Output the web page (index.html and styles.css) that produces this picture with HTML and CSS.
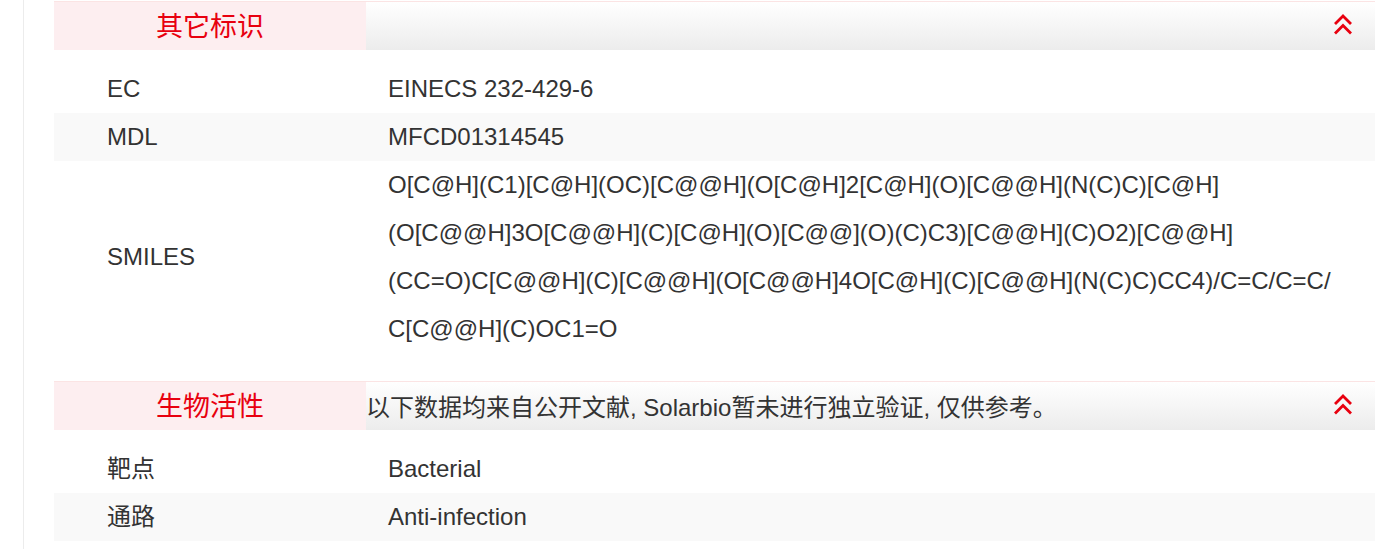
FILE: index.html
```html
<!DOCTYPE html>
<html lang="zh-CN">
<head>
<meta charset="utf-8">
<title>产品信息</title>
<link rel="stylesheet" href="styles.css">
</head>
<body>
<div class="page">
  <section class="sect">
    <div class="sect-head">
      <div class="sect-title">其它标识</div>
      <div class="sect-note"></div>
      <svg class="toggle" viewBox="0 0 20 22" width="20" height="22" aria-hidden="true">
        <polyline points="2,10 10,2 18,10" />
        <polyline points="2,19.5 10,11.5 18,19.5" />
      </svg>
    </div>
    <div class="props">
      <div class="prop"><div class="prop-k">EC</div><div class="prop-v">EINECS 232-429-6</div></div>
      <div class="prop alt"><div class="prop-k">MDL</div><div class="prop-v">MFCD01314545</div></div>
      <div class="prop"><div class="prop-k">SMILES</div><div class="prop-v">O[C@H](C1)[C@H](OC)[C@@H](O[C@H]2[C@H](O)[C@@H](N(C)C)[C@H]<br>(O[C@@H]3O[C@@H](C)[C@H](O)[C@@](O)(C)C3)[C@@H](C)O2)[C@@H]<br>(CC=O)C[C@@H](C)[C@@H](O[C@@H]4O[C@H](C)[C@@H](N(C)C)CC4)/C=C/C=C/<br>C[C@@H](C)OC1=O</div></div>
    </div>
  </section>
  <section class="sect">
    <div class="sect-head">
      <div class="sect-title">生物活性</div>
      <div class="sect-note">以下数据均来自公开文献, Solarbio暂未进行独立验证, 仅供参考。</div>
      <svg class="toggle" viewBox="0 0 20 22" width="20" height="22" aria-hidden="true">
        <polyline points="2,10 10,2 18,10" />
        <polyline points="2,19.5 10,11.5 18,19.5" />
      </svg>
    </div>
    <div class="props">
      <div class="prop"><div class="prop-k">靶点</div><div class="prop-v">Bacterial</div></div>
      <div class="prop alt"><div class="prop-k">通路</div><div class="prop-v">Anti-infection</div></div>
    </div>
  </section>
</div>
</body>
</html>
```
FILE: styles.css
```css
html, body {
  margin: 0;
  padding: 0;
  background: #fff;
  overflow: hidden;
}
body {
  font-family: "Liberation Sans", Arial, "Noto Sans CJK SC", sans-serif;
  color: #333;
  font-size: 24px;
}
.page {
  margin-left: 23px;
  border-left: 1px solid #ececec;
  padding: 1px 0 0 30px;
  min-height: 560px;
}
.sect-head {
  display: flex;
  align-items: center;
  height: 48px;
  border-top: 1px solid #fbe4e4;
  background: linear-gradient(#ffffff, #ececec);
}
.sect-title {
  width: 312px;
  flex: none;
  align-self: stretch;
  display: flex;
  align-items: center;
  justify-content: center;
  padding-bottom: 3px;
  box-sizing: border-box;
  background: #fdeef0;
  color: #e8000f;
  font-size: 27px;
}
.sect-note {
  flex: 1;
  white-space: nowrap;
  font-size: 24px;
  color: #333;
  padding-bottom: 1px;
}
.toggle {
  flex: none;
  margin-right: 22px;
  margin-bottom: 2px;
  fill: none;
  stroke: #e8000f;
  stroke-width: 2.8;
}
.props {
  margin: 15px 0 28px;
}
.prop {
  display: flex;
  align-items: center;
  min-height: 48px;
  line-height: 48px;
}
.prop.alt {
  background: #f9f9f9;
}
.prop-k {
  width: 259px;
  padding-left: 53px;
  flex: none;
}
.prop-v {
  padding-left: 22px;
  flex: 1;
  white-space: nowrap;
}
```
